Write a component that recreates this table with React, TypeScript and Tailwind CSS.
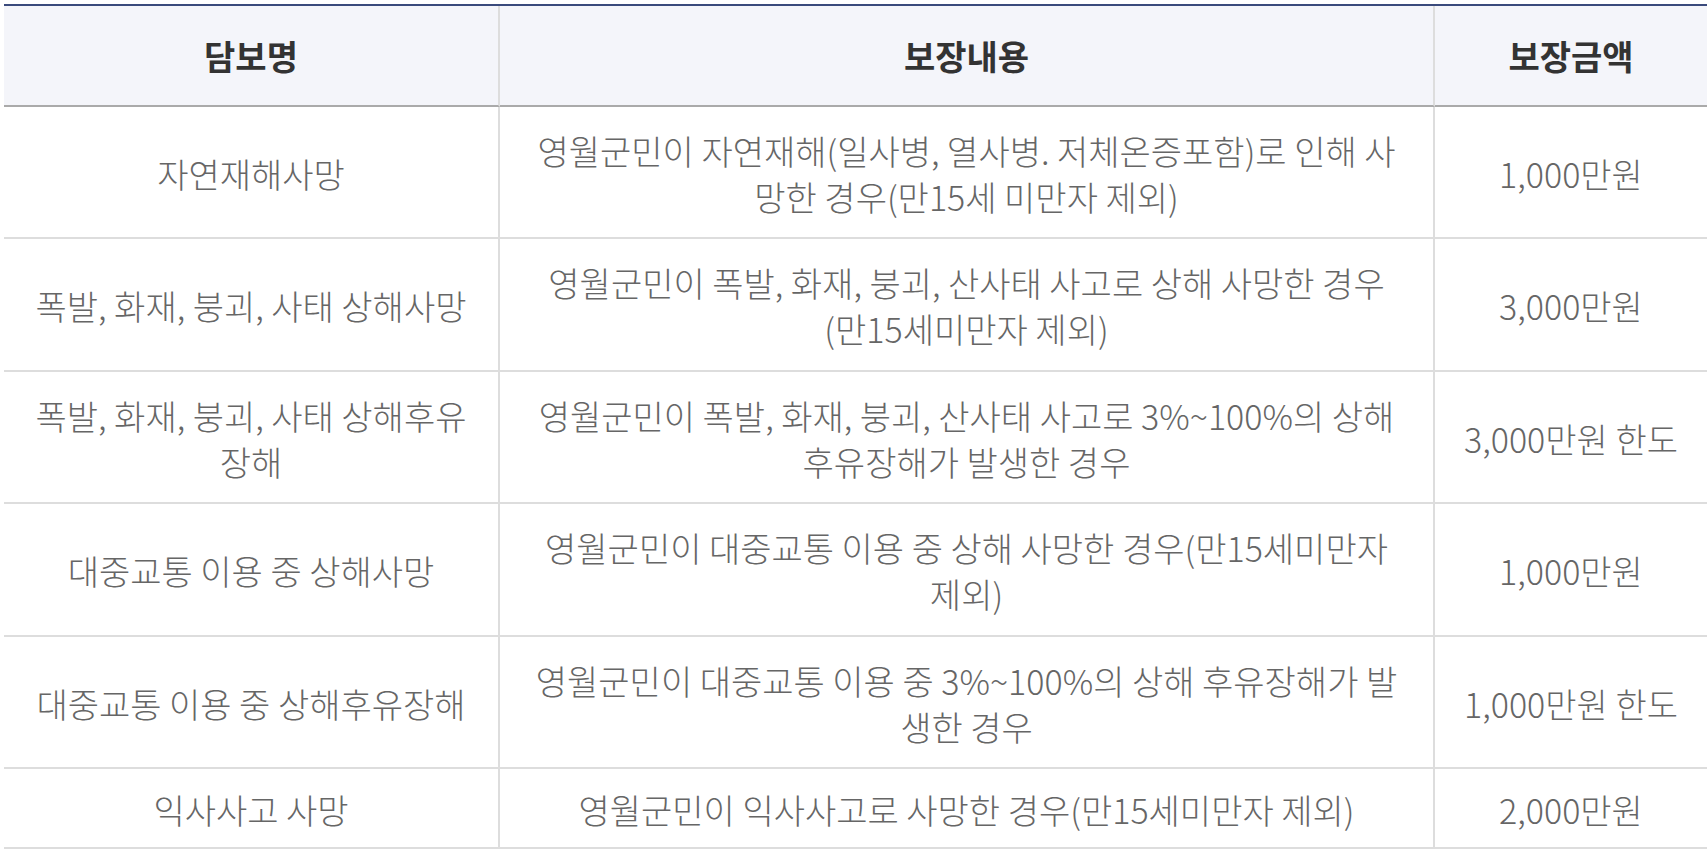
import React from "react";

type Row = { name: string[]; desc: string[]; amount: string; h: string };

const rows: Row[] = [
  {
    name: ["자연재해사망"],
    desc: ["영월군민이 자연재해(일사병, 열사병. 저체온증포함)로 인해 사", "망한 경우(만15세 미만자 제외)"],
    amount: "1,000만원",
    h: "h-[132px]",
  },
  {
    name: ["폭발, 화재, 붕괴, 사태 상해사망"],
    desc: ["영월군민이 폭발, 화재, 붕괴, 산사태 사고로 상해 사망한 경우", "(만15세미만자 제외)"],
    amount: "3,000만원",
    h: "h-[133px]",
  },
  {
    name: ["폭발, 화재, 붕괴, 사태 상해후유", "장해"],
    desc: ["영월군민이 폭발, 화재, 붕괴, 산사태 사고로 3%~100%의 상해", "후유장해가 발생한 경우"],
    amount: "3,000만원 한도",
    h: "h-[132px]",
  },
  {
    name: ["대중교통 이용 중 상해사망"],
    desc: ["영월군민이 대중교통 이용 중 상해 사망한 경우(만15세미만자", "제외)"],
    amount: "1,000만원",
    h: "h-[133px]",
  },
  {
    name: ["대중교통 이용 중 상해후유장해"],
    desc: ["영월군민이 대중교통 이용 중 3%~100%의 상해 후유장해가 발", "생한 경우"],
    amount: "1,000만원 한도",
    h: "h-[132px]",
  },
  {
    name: ["익사사고 사망"],
    desc: ["영월군민이 익사사고로 사망한 경우(만15세미만자 제외)"],
    amount: "2,000만원",
    h: "h-[80px]",
  },
];

function Lines({ lines }: { lines: string[] }) {
  return (
    <div className="whitespace-nowrap">
      {lines.map((l, i) => (
        <div key={i}>{l}</div>
      ))}
    </div>
  );
}

const cellBase =
  "flex items-center justify-center text-center pt-[3px] text-[34px] leading-[46px] font-light text-[#666666] border-b-2 border-[#dddddd]";

export default function App() {
  return (
    <div
      className="w-[1707px] h-[850px] overflow-hidden bg-white pl-[4px] pt-[4px]"
      style={{ fontFamily: '"Noto Sans CJK KR", "Noto Sans", sans-serif' }}
    >
      <div className="border-t-2 border-[#3a4a7c] grid grid-cols-[496px_935px_272px]">
        <div className="h-[101px] bg-[#f4f5fa] border-b-2 border-r-2 border-b-[#aaaaaa] border-r-[#dddddd] flex items-center justify-center text-[34px] font-bold text-[#333333]">
          담보명
        </div>
        <div className="h-[101px] bg-[#f4f5fa] border-b-2 border-r-2 border-b-[#aaaaaa] border-r-[#dddddd] flex items-center justify-center text-[34px] font-bold text-[#333333]">
          보장내용
        </div>
        <div className="h-[101px] bg-[#f4f5fa] border-b-2 border-b-[#aaaaaa] flex items-center justify-center text-[34px] font-bold text-[#333333]">
          보장금액
        </div>
        {rows.map((r, i) => (
          <React.Fragment key={i}>
            <div className={`${cellBase} ${r.h} border-r-2`}>
              <Lines lines={r.name} />
            </div>
            <div className={`${cellBase} ${r.h} border-r-2`}>
              <Lines lines={r.desc} />
            </div>
            <div className={`${cellBase} ${r.h}`}>
              <Lines lines={[r.amount]} />
            </div>
          </React.Fragment>
        ))}
      </div>
    </div>
  );
}
